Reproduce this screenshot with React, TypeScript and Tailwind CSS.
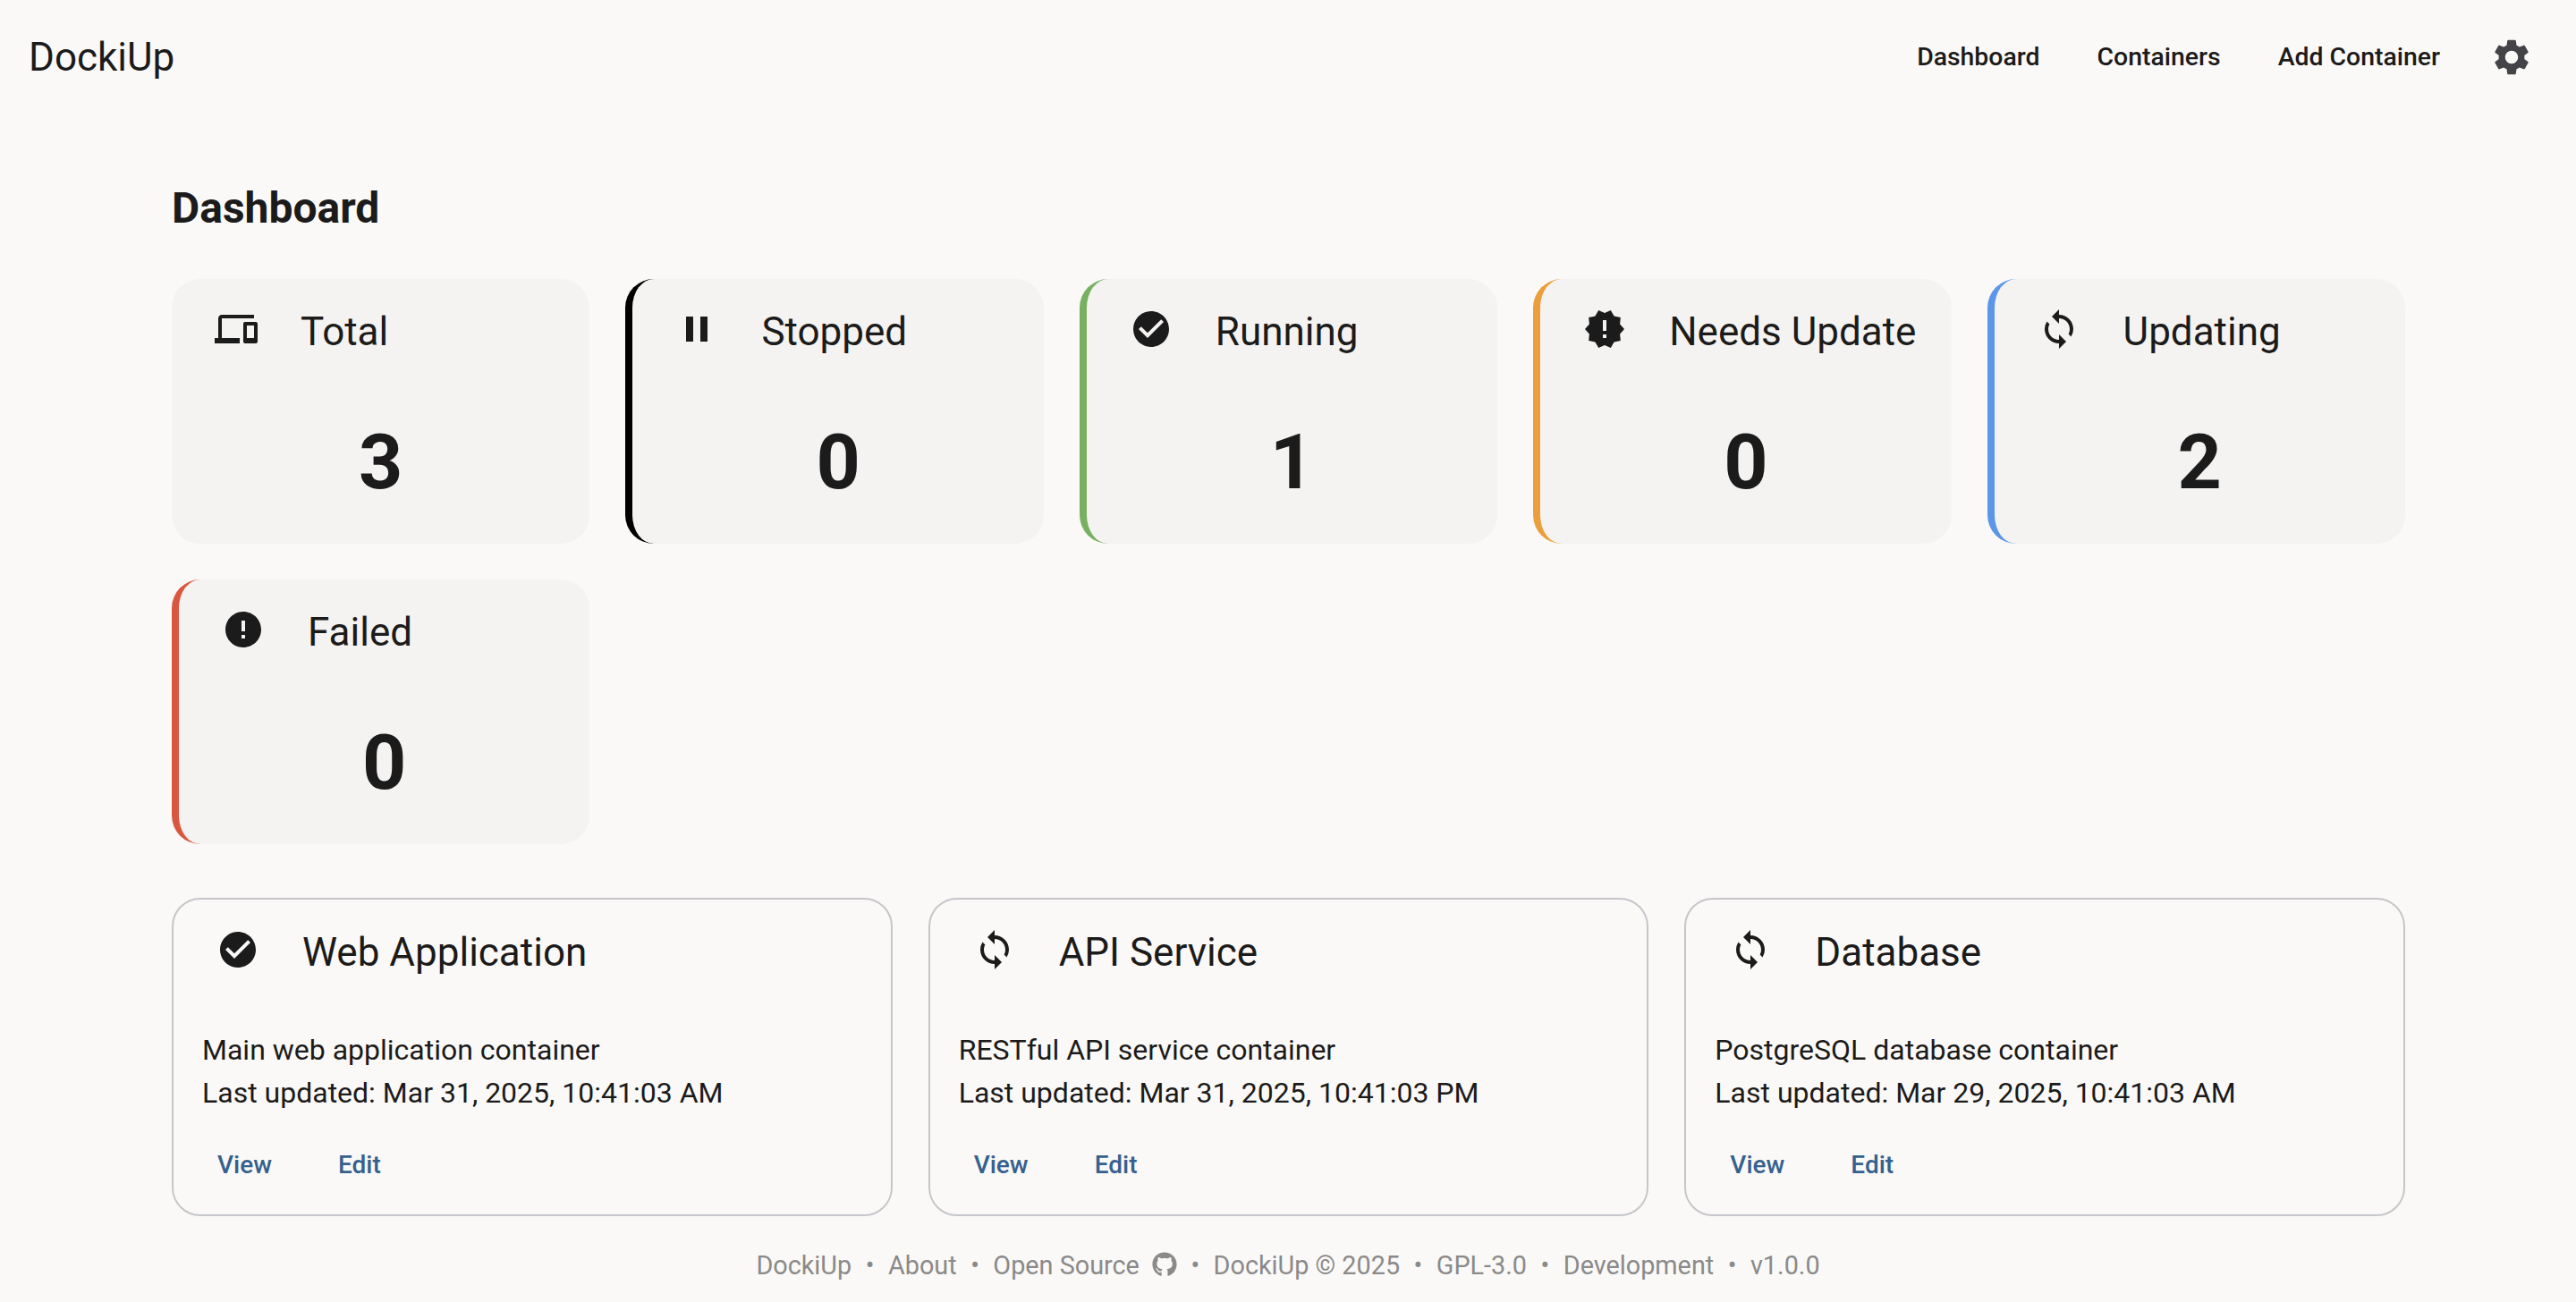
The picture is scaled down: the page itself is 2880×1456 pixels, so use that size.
import type { ReactNode } from 'react'
import { MdCheckCircle, MdDevices, MdError, MdNewReleases, MdPause, MdSettings, MdSync } from 'react-icons/md'
import { FaGithub } from 'react-icons/fa'

const stats = [
  { label: 'Total', value: 3, icon: <MdDevices />, border: '' },
  { label: 'Stopped', value: 0, icon: <MdPause />, border: 'border-l-8 border-black' },
  { label: 'Running', value: 1, icon: <MdCheckCircle />, border: 'border-l-8 border-[#78b061]' },
  { label: 'Needs Update', value: 0, icon: <MdNewReleases />, border: 'border-l-8 border-[#eb9f3c]' },
  { label: 'Updating', value: 2, icon: <MdSync />, border: 'border-l-8 border-[#5c96e8]' },
  { label: 'Failed', value: 0, icon: <MdError />, border: 'border-l-8 border-[#d9573f]' },
]

const containers = [
  { name: 'Web Application', desc: 'Main web application container', updated: 'Mar 31, 2025, 10:41:03 AM', icon: <MdCheckCircle /> },
  { name: 'API Service', desc: 'RESTful API service container', updated: 'Mar 31, 2025, 10:41:03 PM', icon: <MdSync /> },
  { name: 'Database', desc: 'PostgreSQL database container', updated: 'Mar 29, 2025, 10:41:03 AM', icon: <MdSync /> },
]

function IconBox({ children }: { children: ReactNode }) {
  return <span className="flex h-12 w-12 shrink-0 items-center justify-center text-[48px] -translate-y-[3px]">{children}</span>
}

function StatCard({ label, value, icon, border }: (typeof stats)[number]) {
  return (
    <div className={`flex h-[296px] flex-col rounded-[32px] bg-[#f5f3f1] pt-[35px] ${border}`}>
      <div className="flex h-12 items-center gap-12 pl-12">
        <IconBox>{icon}</IconBox>
        <span className="text-[44px] leading-[48px] whitespace-nowrap">{label}</span>
      </div>
      <div className="mt-[66px] text-center text-[86px] leading-[112px] font-bold">{value}</div>
    </div>
  )
}

function ContainerCard({ name, desc, updated, icon }: (typeof containers)[number]) {
  return (
    <div className="h-[356px] rounded-[32px] border-2 border-[#c4c6ca] pt-[35px]">
      <div className="flex h-12 items-center gap-12 pl-12">
        <IconBox>{icon}</IconBox>
        <span className="text-[44px] leading-[48px]">{name}</span>
      </div>
      <div className="mt-[61px] pl-8 text-[32px] leading-[48px]">
        <p>{desc}</p>
        <p>Last updated: {updated}</p>
      </div>
      <div className="mt-[29px] flex h-14 items-center gap-[74px] pl-[49px] text-[28px] font-medium text-[#36618e]">
        <a>View</a>
        <a>Edit</a>
      </div>
    </div>
  )
}

function Dot() {
  return <span className="px-[15.5px] text-[#8a8a8a]">•</span>
}

export default function App() {
  return (
    <div className="flex h-[1456px] flex-col overflow-hidden bg-[#fbf9f7] font-['Roboto',sans-serif] text-[#1c1b1b]">
      <header className="flex h-32 items-center justify-between pl-8 pr-12">
        <span className="text-[44px]">DockiUp</span>
        <nav className="flex items-center gap-16 text-[28.4px] font-medium">
          <a>Dashboard</a>
          <a>Containers</a>
          <a>Add Container</a>
          <MdSettings className="ml-[-8px] text-[48px] text-[#444448]" />
        </nav>
      </header>

      <main className="pl-48 pr-[191px]">
        <h1 className="mt-[73px] mb-[47px] text-[48px] leading-[64px] font-bold">Dashboard</h1>
        <div className="grid grid-cols-5 gap-10">
          {stats.map((s) => (
            <StatCard key={s.label} {...s} />
          ))}
        </div>
        <div className="mt-[60px] grid grid-cols-3 gap-10">
          {containers.map((c) => (
            <ContainerCard key={c.name} {...c} />
          ))}
        </div>
      </main>

      <footer className="mt-7 flex h-14 items-center justify-center text-[28.8px] text-[#8a8a8a]">
        <span>DockiUp</span>
        <Dot />
        <span>About</span>
        <Dot />
        <span className="flex items-center gap-[14px]">
          Open Source <FaGithub className="-translate-y-[2px] text-[28px]" />
        </span>
        <Dot />
        <span>DockiUp © 2025</span>
        <Dot />
        <span>GPL-3.0</span>
        <Dot />
        <span>Development</span>
        <Dot />
        <span>v1.0.0</span>
      </footer>
    </div>
  )
}
